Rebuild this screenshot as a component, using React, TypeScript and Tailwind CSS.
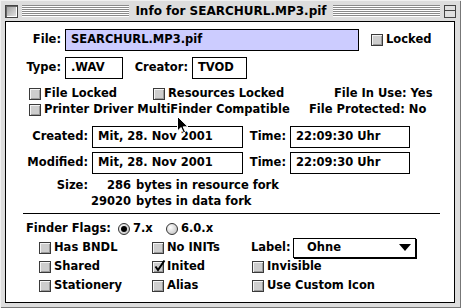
import type { ReactNode } from 'react';

const stripes =
  'h-[12px] flex-1 bg-[repeating-linear-gradient(to_bottom,#8a8a8a_0px,#8a8a8a_1px,#ffffff_1px,#ffffff_2px)]';

const CheckBox = ({ checked }: { checked?: boolean }) => (
  <span className="relative block h-[12px] w-[12px] shrink-0 border border-[#3a3a3a] bg-[#cdcdcd] shadow-[inset_1px_1px_0_#f4f4f4,inset_-1px_-1px_0_#9a9a9a]">
    {checked && (
      <svg
        className="absolute left-[1px] top-[-3px]"
        width="12"
        height="13"
        viewBox="0 0 12 13"
        fill="none"
      >
        <path d="M1.5 7.5 L4 11 L10.5 1.5" stroke="#000" strokeWidth="2" />
      </svg>
    )}
  </span>
);

const Check = ({ label, checked }: { label: string; checked?: boolean }) => (
  <div className="flex items-center whitespace-nowrap">
    <CheckBox checked={checked} />
    <span className="ml-[3px]">{label}</span>
  </div>
);

const Radio = ({ on }: { on?: boolean }) => (
  <span className="flex h-[12px] w-[12px] shrink-0 items-center justify-center rounded-full border border-[#333] bg-[radial-gradient(circle_at_35%_35%,#ffffff,#b8b8b8)]">
    {on && <span className="block h-[6px] w-[6px] rounded-full bg-black" />}
  </span>
);

const Field = ({ w, children, hilite }: { w: string; children?: ReactNode; hilite?: boolean }) => (
  <div
    className={`${w} ${hilite ? 'bg-[#ccccff]' : 'bg-white'} flex h-[22px] shrink-0 items-center border border-black pl-[5px] whitespace-nowrap`}
  >
    {children}
  </div>
);

export default function App() {
  return (
    <div className="relative h-[308px] w-[461px] overflow-hidden border-t border-l border-[#f0f0f0] bg-[#dddddd] font-['DejaVu_Sans',sans-serif] text-[11.5px] leading-none font-bold text-black shadow-[inset_-1px_-1px_0_#777]">
      {/* title bar */}
      <div className="flex h-[20px] items-center pr-[5px] pl-[4px]">
        <div className="h-[13px] w-[13px] shrink-0 border border-[#444] bg-[linear-gradient(135deg,#9a9a9a,#e8e8e8)] shadow-[inset_1px_1px_0_#666,inset_-1px_-1px_0_#fff]" />
        <div className={`ml-[4px] ${stripes}`} />
        <span className="px-[6px] text-[12px] whitespace-nowrap">Info for SEARCHURL.MP3.pif</span>
        <div className={`mr-[4px] ${stripes}`} />
        <div className="flex h-[13px] w-[12px] shrink-0 flex-col border border-[#444] bg-[#e0e0e0]">
          <div className="h-[5px] border-b border-[#444]" />
        </div>
      </div>

      {/* content */}
      <div className="ml-[4px] h-[282px] w-[450px] border border-black bg-white">
        <div className="flex flex-col">
          <div className="mt-[7px] flex h-[22px] items-center">
            <span className="w-[55px] text-right">File:</span>
            <div className="ml-[4px]">
              <Field w="w-[294px]" hilite>
                SEARCHURL.MP3.pif
              </Field>
            </div>
            <div className="ml-[12px]">
              <Check label="Locked" />
            </div>
          </div>

          <div className="mt-[6px] flex h-[22px] items-center">
            <span className="w-[55px] text-right">Type:</span>
            <div className="ml-[4px]">
              <Field w="w-[58px]">.WAV</Field>
            </div>
            <span className="w-[65px] text-right">Creator:</span>
            <div className="ml-[4px]">
              <Field w="w-[55px]">TVOD</Field>
            </div>
          </div>

          <div className="mt-[7px] flex h-[16px] items-center pl-[23px] whitespace-nowrap">
            <div className="w-[124px]">
              <Check label="File Locked" />
            </div>
            <div className="w-[181px]">
              <Check label="Resources Locked" />
            </div>
            <span>File In Use: Yes</span>
          </div>
          <div className="flex h-[16px] items-center pl-[23px] whitespace-nowrap">
            <div className="w-[280px]">
              <Check label="Printer Driver MultiFinder Compatible" />
            </div>
            <span>File Protected: No</span>
          </div>

          <div className="mt-[8px] flex h-[22px] items-center">
            <span className="w-[82px] text-right">Created:</span>
            <div className="ml-[4px]">
              <Field w="w-[151px]">Mit, 28. Nov 2001</Field>
            </div>
            <span className="w-[43px] text-right">Time:</span>
            <div className="ml-[4px]">
              <Field w="w-[120px]">22:09:30 Uhr</Field>
            </div>
          </div>
          <div className="mt-[4px] flex h-[22px] items-center">
            <span className="w-[82px] text-right">Modified:</span>
            <div className="ml-[4px]">
              <Field w="w-[151px]">Mit, 28. Nov 2001</Field>
            </div>
            <span className="w-[43px] text-right">Time:</span>
            <div className="ml-[4px]">
              <Field w="w-[120px]">22:09:30 Uhr</Field>
            </div>
          </div>

          <div className="mt-[4px] flex h-[16px] items-center whitespace-nowrap">
            <span className="w-[82px] text-right">Size:</span>
            <span className="w-[43px] text-right">286</span>
            <span className="ml-[5px]">bytes in resource fork</span>
          </div>
          <div className="flex h-[16px] items-center whitespace-nowrap">
            <span className="w-[125px] text-right">29020</span>
            <span className="ml-[5px]">bytes in data fork</span>
          </div>

          <div className="mt-[3px] ml-[17px] h-[1px] w-[417px] bg-black" />

          <div className="mt-[7px] flex h-[16px] items-center whitespace-nowrap">
            <span className="w-[112px] shrink-0 pl-[20px]">Finder Flags:</span>
            <div className="flex w-[48px] items-center">
              <Radio on />
              <span className="ml-[3px]">7.x</span>
            </div>
            <div className="flex items-center">
              <Radio />
              <span className="ml-[3px]">6.0.x</span>
            </div>
          </div>

          <div className="mt-[1px] flex pl-[33px]">
            <div className="flex w-[113px] flex-col">
              <div className="flex h-[19px] items-center">
                <Check label="Has BNDL" />
              </div>
              <div className="flex h-[19px] items-center">
                <Check label="Shared" />
              </div>
              <div className="flex h-[19px] items-center">
                <Check label="Stationery" />
              </div>
            </div>
            <div className="flex w-[99px] flex-col">
              <div className="flex h-[19px] items-center">
                <Check label="No INITs" />
              </div>
              <div className="flex h-[19px] items-center">
                <Check label="Inited" checked />
              </div>
              <div className="flex h-[19px] items-center">
                <Check label="Alias" />
              </div>
            </div>
            <div className="flex flex-col">
              <div className="flex h-[19px] items-center">
                <span className="w-[42px]">Label:</span>
                <div className="flex h-[20px] w-[123px] items-center justify-between border border-black bg-white pr-[4px] pl-[13px] shadow-[1px_1px_0_#000]">
                  <span>Ohne</span>
                  <svg width="12" height="7" viewBox="0 0 12 7">
                    <path d="M0 0 H12 L6 7 Z" fill="#000" />
                  </svg>
                </div>
              </div>
              <div className="flex h-[19px] items-center pl-[1px]">
                <Check label="Invisible" />
              </div>
              <div className="flex h-[19px] items-center pl-[1px]">
                <Check label="Use Custom Icon" />
              </div>
            </div>
          </div>
        </div>
      </div>

      {/* mouse pointer */}
      <svg className="absolute top-[115px] left-[176px]" width="12" height="18" viewBox="0 0 12 18">
        <path
          d="M0.5 0.5 V15 L4 11.5 L6.5 17 L8.5 16 L6.2 10.8 H11 Z"
          fill="#000"
          stroke="#fff"
          strokeWidth="1"
        />
      </svg>
    </div>
  );
}
